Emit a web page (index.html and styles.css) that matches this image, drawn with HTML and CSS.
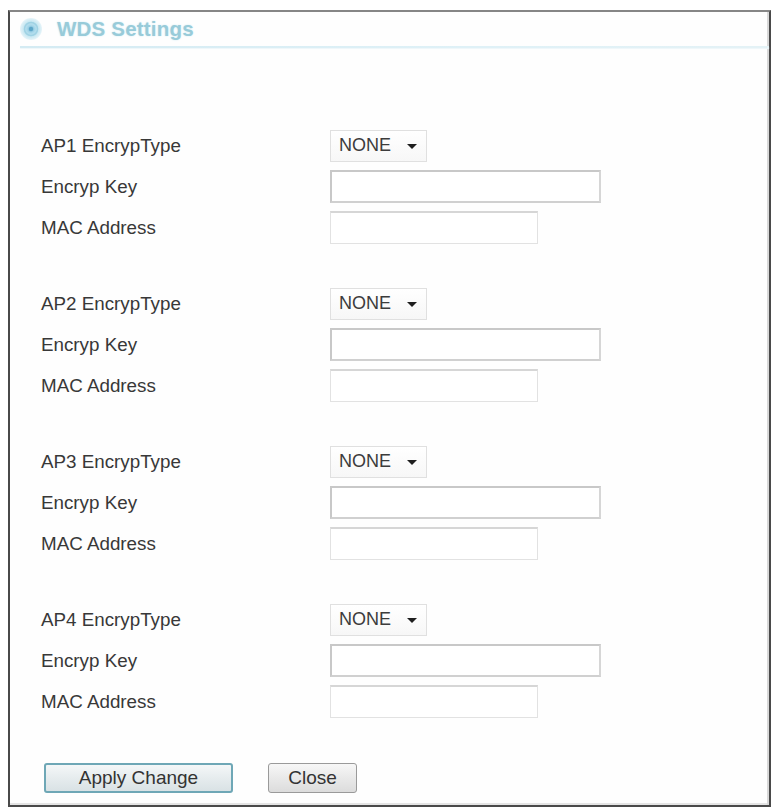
FILE: index.html
```html
<!DOCTYPE html>
<html>
<head>
<meta charset="utf-8">
<title>WDS Settings</title>
<link rel="stylesheet" href="styles.css">
</head>
<body>
<div class="frame">
  <div class="header">
    <svg class="header-icon" width="24" height="24" viewBox="0 0 24 24">
      <defs>
        <radialGradient id="dot" cx="50%" cy="50%" r="50%">
          <stop offset="0" stop-color="#6fb4d2"/>
          <stop offset="0.35" stop-color="#a9d8ea"/>
          <stop offset="0.7" stop-color="#c9e8f2"/>
          <stop offset="1" stop-color="#e6f4f9"/>
        </radialGradient>
      </defs>
      <circle cx="12" cy="12" r="11" fill="url(#dot)"/>
      <circle cx="12" cy="12" r="6.5" fill="none" stroke="#9fd2e4" stroke-width="1.5"/>
      <circle cx="12" cy="12" r="2.2" fill="#5ea7c9"/>
    </svg>
    <span class="header-title">WDS Settings</span>
  </div>
  <div class="header-line"></div>

  <form class="form">
    <div class="group">
      <label class="label">AP1 EncrypType</label>
      <div class="select"><span>NONE</span><i class="caret"></i></div>
      <label class="label">Encryp Key</label>
      <input class="input key" type="text">
      <label class="label">MAC Address</label>
      <input class="input mac" type="text">
    </div>

    <div class="group">
      <label class="label">AP2 EncrypType</label>
      <div class="select"><span>NONE</span><i class="caret"></i></div>
      <label class="label">Encryp Key</label>
      <input class="input key" type="text">
      <label class="label">MAC Address</label>
      <input class="input mac" type="text">
    </div>

    <div class="group">
      <label class="label">AP3 EncrypType</label>
      <div class="select"><span>NONE</span><i class="caret"></i></div>
      <label class="label">Encryp Key</label>
      <input class="input key" type="text">
      <label class="label">MAC Address</label>
      <input class="input mac" type="text">
    </div>

    <div class="group">
      <label class="label">AP4 EncrypType</label>
      <div class="select"><span>NONE</span><i class="caret"></i></div>
      <label class="label">Encryp Key</label>
      <input class="input key" type="text">
      <label class="label">MAC Address</label>
      <input class="input mac" type="text">
    </div>

    <div class="actions">
      <button type="button" class="btn btn-apply">Apply Change</button>
      <button type="button" class="btn btn-close">Close</button>
    </div>
  </form>
</div>
</body>
</html>
```
FILE: styles.css
```css
* {
  box-sizing: border-box;
}

html, body {
  margin: 0;
  background: #ffffff;
}

body {
  font-family: "Liberation Sans", Arial, sans-serif;
  color: #363636;
}

.frame {
  margin: 10px 0 0 8px;
  width: 763px;
  height: 797px;
  border: 2px solid #4a4a4a;
  border-top-color: #868686;
  box-shadow: inset -2px 0 0 #d8d8d8, inset 0 -2px 0 #e4e4e4;
  background: #fefefe;
}

/* title bar */
.header {
  display: flex;
  align-items: center;
  height: 34px;
  padding-left: 9px;
  gap: 14px;
}

.header-icon {
  display: block;
  filter: blur(0.6px);
}

.header-title {
  font-size: 20.5px;
  font-weight: bold;
  color: #98cbd9;
  text-shadow: 0 0 2px #cfeaf2;
  letter-spacing: 0.2px;
}

.header-line {
  margin-left: 10px;
  height: 2px;
  background: linear-gradient(to right, #d4ebf3, #dff1f7 60%, #e4f2f6);
  box-shadow: 0 1px 1px #eef7fa;
}

/* form body */
.form {
  padding: 77px 0 0 31px;
}

.group {
  display: grid;
  grid-template-columns: 289px auto;
  grid-auto-rows: 41px;
  align-items: center;
  justify-items: start;
  margin-bottom: 35px;
}

.group:last-of-type {
  margin-bottom: 0;
}

.label {
  font-size: 18.8px;
  color: #383838;
}

.select {
  display: flex;
  align-items: center;
  justify-content: space-between;
  width: 97px;
  height: 32px;
  padding: 0 9px 0 8px;
  border: 1px solid #e0e0e0;
  background: linear-gradient(#ffffff, #f7f7f7);
  font-size: 18px;
  color: #3c3c3c;
}

.caret {
  display: block;
  width: 0;
  height: 0;
  border-left: 5px solid transparent;
  border-right: 5px solid transparent;
  border-top: 5px solid #1e1e1e;
  margin-top: 1px;
}

.input {
  height: 33px;
  margin: 0;
  padding: 0 4px;
  font: 16px "Liberation Sans", Arial, sans-serif;
  background: #ffffff;
  outline: none;
}

.input.key {
  width: 271px;
  border: 2px solid #c8c8c8;
  border-right-color: #d6d6d6;
  border-bottom-color: #d0d0d0;
}

.input.mac {
  width: 208px;
  border: 1px solid #e2e2e2;
  border-top: 2px solid #d6d6d6;
}

/* buttons */
.actions {
  display: flex;
  gap: 35px;
  margin-top: 41px;
  padding-left: 3px;
}

.btn {
  height: 30px;
  margin: 0;
  padding: 0;
  font: 19px "Liberation Sans", Arial, sans-serif;
  color: #333333;
  background: linear-gradient(#f7f7f7, #e9e9e9 50%, #dcdcdc);
  border-radius: 3px;
  cursor: pointer;
}

.btn-apply {
  width: 189px;
  border: 2px solid #6ea7b6;
  background: linear-gradient(#f4f7f8, #e6ecee 50%, #d9e2e5);
}

.btn-close {
  width: 89px;
  border: 1px solid #9a9a9a;
}
```
